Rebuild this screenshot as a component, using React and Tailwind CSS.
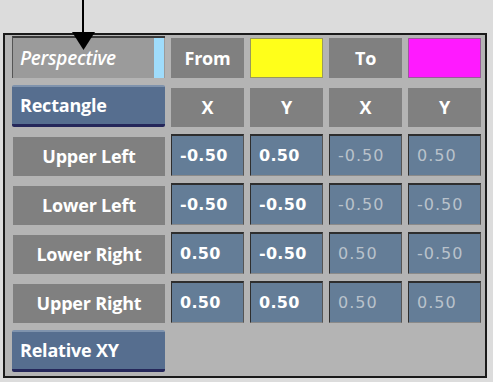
import React from 'react';

const font = { fontFamily: '"Open Sans", "DejaVu Sans", sans-serif' };
const numFont = { fontFamily: '"DejaVu Sans", "Open Sans", sans-serif' };

function GrayCell({ children, className = '' }) {
    return (
        <div className={`flex items-center justify-center bg-[#808080] text-white font-bold text-[18px] tracking-[-0.2px] ${className}`}>
            {children}
        </div>
    );
}

function ValueCell({ value, active }) {
    return (
        <div
            style={numFont}
            className={`flex items-center pl-[8px] bg-[#647d97] border-t-2 border-l border-[#2e2e2e] border-r border-r-[#555] border-b border-b-[#8a8a8a] text-[16px] ${
                active ? 'text-white font-bold tracking-[0.3px]' : 'text-[#b9c2cb] font-normal tracking-[1px]'
            }`}
        >
            {value}
        </div>
    );
}

function BlueButton({ children }) {
    return (
        <div className="flex items-center pl-[8px] bg-[#566e8f] border-t-2 border-t-[#7f93ad] border-b-[3px] border-b-[#25275a] rounded-[2px] text-white font-bold text-[18px] tracking-[-0.2px]">
            {children}
        </div>
    );
}

const rows = [
    { label: 'Upper Left', values: ['-0.50', '0.50', '-0.50', '0.50'] },
    { label: 'Lower Left', values: ['-0.50', '-0.50', '-0.50', '-0.50'] },
    { label: 'Lower Right', values: ['0.50', '-0.50', '0.50', '-0.50'] },
    { label: 'Upper Right', values: ['0.50', '0.50', '0.50', '0.50'] },
];

export default function App() {
    return (
        <div className="w-[493px] h-[382px] bg-[#dcdcdc] relative overflow-hidden" style={font}>
            <div className="pt-[33px] pl-[3px]">
                <div className="w-[484px] h-[345px] bg-[#b4b4b4] border-2 border-[#1a1a1a] pt-[1px] pl-[7px]">
                    <div className="grid grid-cols-[153px_73px_73px_73px_73px] grid-rows-[42px_42px_42px_42px_42px_42px_42px] gap-x-[6px] gap-y-[7px]">
                        {/* row 1 */}
                        <div className="flex items-center bg-[#9b9b9b] border-t-2 border-t-[#3a3a3a] border-l border-l-[#555]">
                            <span className="flex-1 pl-[7px] text-white italic font-semibold text-[19px] tracking-[-0.3px]">Perspective</span>
                            <div className="w-[10px] h-full bg-[#9fdcfb] mr-[1px]" />
                        </div>
                        <GrayCell className="mt-[2px]">From</GrayCell>
                        <div className="mt-[2px] bg-[#ffff1a] border border-[#9a9a5a]" />
                        <GrayCell className="mt-[2px]">To</GrayCell>
                        <div className="mt-[2px] bg-[#ff1aff] border border-[#9a5a9a]" />

                        {/* row 2 */}
                        <BlueButton>Rectangle</BlueButton>
                        <GrayCell className="mt-[3px]">X</GrayCell>
                        <GrayCell className="mt-[3px]">Y</GrayCell>
                        <GrayCell className="mt-[3px]">X</GrayCell>
                        <GrayCell className="mt-[3px]">Y</GrayCell>

                        {rows.map((r) => (
                            <React.Fragment key={r.label}>
                                <GrayCell className="mt-[3px] ml-[1px]">{r.label}</GrayCell>
                                {r.values.map((v, i) => (
                                    <ValueCell key={i} value={v} active={i < 2} />
                                ))}
                            </React.Fragment>
                        ))}

                        <BlueButton>Relative XY</BlueButton>
                    </div>
                </div>
            </div>

            {/* pointer arrow */}
            <svg className="absolute left-0 top-0" width="120" height="60" viewBox="0 0 120 60">
                <line x1="83" y1="0" x2="83" y2="36" stroke="#000" strokeWidth="2" />
                <polygon points="72,32 95,32 83.5,50" fill="#000" />
            </svg>
        </div>
    );
}
